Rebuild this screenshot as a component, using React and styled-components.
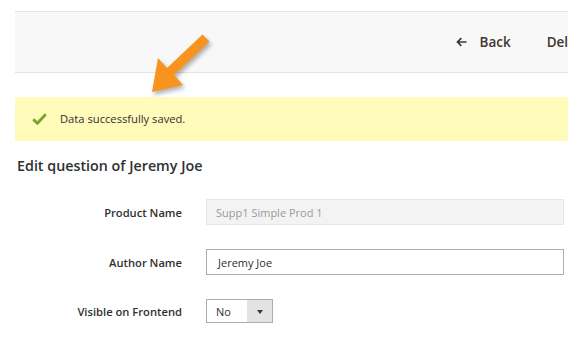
import React from "react";
import styled, { createGlobalStyle } from "styled-components";

const Global = createGlobalStyle`
  html, body { margin: 0; padding: 0; background: #fff; }
  body { font-family: "Open Sans", "Liberation Sans", sans-serif; color: #303030; }
`;

const Page = styled.div`
  position: relative;
  width: 568px;
  height: 343px;
  overflow: hidden;
  padding: 11px 0 0 15px;
  box-sizing: border-box;
`;

const ActionsBar = styled.div`
  width: calc(100% + 40px);
  height: 62px;
  box-sizing: border-box;
  background: #f8f8f8;
  border-top: 1px solid #e3e3e3;
  border-bottom: 1px solid #e3e3e3;
  display: flex;
  align-items: center;
  justify-content: flex-end;
  gap: 36px;
  padding: 0 19px 1px 0;
`;

const ActionButton = styled.button`
  display: flex;
  align-items: center;
  gap: 12px;
  border: 0;
  background: none;
  padding: 0;
  font-family: inherit;
  font-weight: 600;
  font-size: 13.5px;
  color: #41362f;
  cursor: pointer;
`;

const Message = styled.div`
  margin-top: 24px;
  height: 43px;
  background: #fffbbb;
  display: flex;
  align-items: center;
  gap: 13px;
  padding: 0 0 1px 17px;
  font-size: 11.2px;
  color: #303030;
`;

const Heading = styled.h1`
  margin: 15px 0 0 2px;
  font-size: 14.3px;
  line-height: 20px;
  font-weight: 600;
  color: #303030;
`;

const Form = styled.div`
  margin-top: 23px;
  display: flex;
  flex-direction: column;
  gap: 24px;
`;

const Row = styled.div`
  display: grid;
  grid-template-columns: 167px ${(p) => p.$field || "358px"};
  column-gap: 24px;
  align-items: center;
`;

const Label = styled.label`
  text-align: right;
  font-size: 11.2px;
  font-weight: 600;
  color: #303030;
`;

const Input = styled.div`
  height: 26px;
  box-sizing: border-box;
  border: 1px solid ${(p) => (p.$disabled ? "#e6e6e6" : "#adadad")};
  background: ${(p) => (p.$disabled ? "#f3f3f3" : "#fff")};
  color: ${(p) => (p.$disabled ? "#9a9a9a" : "#303030")};
  font-size: 11px;
  display: flex;
  align-items: center;
  padding-left: ${(p) => (p.$disabled ? "9px" : "11px")};
`;

const Select = styled.div`
  height: 24px;
  box-sizing: border-box;
  border: 1px solid #adadad;
  display: flex;
  font-size: 11px;
  color: #303030;
`;

const SelectValue = styled.div`
  flex: 1;
  display: flex;
  align-items: center;
  padding-left: 9px;
  background: #fff;
`;

const SelectButton = styled.div`
  width: 25px;
  background: #e3e3e3;
  display: flex;
  align-items: center;
  justify-content: center;
`;

const Caret = styled.span`
  width: 0;
  height: 0;
  border-left: 3px solid transparent;
  border-right: 3px solid transparent;
  border-top: 4px solid #41362f;
  margin-top: 1px;
`;

const Annotation = styled.svg`
  position: absolute;
  left: 0;
  top: 0;
  pointer-events: none;
  filter: drop-shadow(2px 3px 2px rgba(0, 0, 0, 0.3));
`;

export default function App() {
  return (
    <>
      <Global />
      <Page>
        <ActionsBar>
          <ActionButton>
            <svg width="11" height="10" viewBox="0 0 11 10">
              <path d="M10.5 5H1.5M5.3 1.2L1.5 5l3.8 3.8" fill="none" stroke="#41362f" strokeWidth="1.7" />
            </svg>
            Back
          </ActionButton>
          <ActionButton>Delete</ActionButton>
        </ActionsBar>
        <Message>
          <svg width="15" height="12" viewBox="0 0 15 12">
            <path d="M1.2 6.2l4.2 4.1L13.8 1.2" fill="none" stroke="#79a22e" strokeWidth="2.8" />
          </svg>
          Data successfully saved.
        </Message>
        <Heading>Edit question of Jeremy Joe</Heading>
        <Form>
          <Row>
            <Label>Product Name</Label>
            <Input $disabled>Supp1 Simple Prod 1</Input>
          </Row>
          <Row>
            <Label>Author Name</Label>
            <Input>Jeremy Joe</Input>
          </Row>
          <Row $field="67px">
            <Label>Visible on Frontend</Label>
            <Select>
              <SelectValue>No</SelectValue>
              <SelectButton>
                <Caret />
              </SelectButton>
            </Select>
          </Row>
        </Form>
        <Annotation width="568" height="343" viewBox="0 0 568 343">
          <polygon
            points="202.5,34.5 209.5,41.5 174,75 183,85 152,92 158,58 167,68"
            fill="#f7931e"
          />
        </Annotation>
      </Page>
    </>
  );
}
